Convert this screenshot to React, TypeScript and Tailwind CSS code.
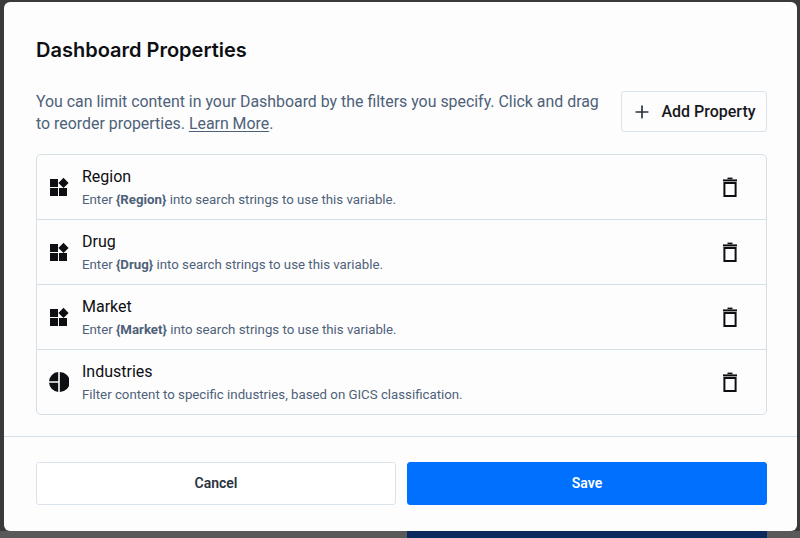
import React from 'react';
import { Plus } from 'lucide-react';

interface Property {
  name: string;
  token?: string;
  description?: string;
  icon: 'widgets' | 'pie';
}

const properties: Property[] = [
  { name: 'Region', token: '{Region}', icon: 'widgets' },
  { name: 'Drug', token: '{Drug}', icon: 'widgets' },
  { name: 'Market', token: '{Market}', icon: 'widgets' },
  {
    name: 'Industries',
    description: 'Filter content to specific industries, based on GICS classification.',
    icon: 'pie',
  },
];

const WidgetsIcon = () => (
  <svg width="20" height="20" viewBox="0 0 20 20" fill="#0d0f12">
    <rect x="1" y="2" width="8" height="8" />
    <rect x="1" y="11" width="8" height="8" />
    <rect x="10" y="11" width="8" height="8" />
    <path d="M14.5 0.8 L19.6 6 L14.5 11 L9.4 6 Z" />
  </svg>
);

const PieIcon = () => (
  <svg width="20" height="20" viewBox="0 0 20 20" fill="#0d0f12">
    <path d="M9.2 0 V9.2 H0 A10 10 0 0 1 9.2 0 Z" />
    <path d="M0 10.8 H9.2 V20 A10 10 0 0 1 0 10.8 Z" />
    <path d="M10.8 0 A10 10 0 0 1 10.8 20 Z" />
  </svg>
);

const TrashIcon = () => (
  <svg width="16" height="20" viewBox="0 0 16 20" fill="none" stroke="#0d0f12">
    <path d="M1 3.4 H15" strokeWidth="2" />
    <path d="M5.5 1.4 H10.5" strokeWidth="1.6" />
    <rect x="2.4" y="6" width="11.2" height="13" strokeWidth="2" />
  </svg>
);

const PropertyRow = ({ property }: { property: Property }) => (
  <div className="flex h-[65px] items-center border-b border-[#d5dfe6] last:border-b-0 last:h-[64px] pl-[12px] pr-[28px]">
    <div className="w-[33px] shrink-0">
      {property.icon === 'widgets' ? <WidgetsIcon /> : <PieIcon />}
    </div>
    <div className="flex-1 min-w-0 pt-[1px]">
      <div className="text-[16px] leading-[22px] text-[#0d0f12]">{property.name}</div>
      <div className="text-[13.25px] leading-[20px] text-[#4d6178] mt-[2px]">
        {property.token ? (
          <>
            Enter <span className="font-bold">{property.token}</span> into search strings to use this variable.
          </>
        ) : (
          property.description
        )}
      </div>
    </div>
    <button className="shrink-0 flex">
      <TrashIcon />
    </button>
  </div>
);

export default function App() {
  return (
    <div className="relative h-[538px] w-[800px] overflow-hidden bg-[#3b3a3b] font-['Roboto',sans-serif]">
      <div className="flex h-[7px] absolute bottom-0 left-0 right-0">
        <div className="w-[407px] bg-[#59595a]" />
        <div className="w-[360px] bg-[#0a2a5e]" />
        <div className="flex-1 bg-[#59595a]" />
      </div>
      <div className="relative ml-[4px] mr-[3px] mt-[2px] h-[529px] rounded-[6px] bg-[#fefdfe] flex flex-col">
        <div className="pl-[32px] pr-[30px] pt-[34px] flex-1">
          <h1 className="font-['Inter',sans-serif] text-[20px] leading-[28px] font-semibold text-[#0d0f12]">
            Dashboard Properties
          </h1>
          <div className="mt-[26px] flex items-start justify-between">
            <p className="w-[575px] pt-[1px] text-[15.9px] leading-[22px] text-[#4d6178]">
              You can limit content in your Dashboard by the filters you specify. Click and drag to reorder
              properties. <span className="underline underline-offset-2">Learn More</span>.
            </p>
            <button className="mt-[1px] flex h-[41px] w-[146px] items-center justify-center gap-[9px] rounded-[3px] border border-[#dbe3ea] text-[16px] font-medium text-[#16181d]">
              <Plus size={20} strokeWidth={2} color="#2b3340" />
              Add Property
            </button>
          </div>
          <div className="mt-[19px] rounded-[5px] border border-[#d5dfe6]">
            {properties.map((property) => (
              <PropertyRow key={property.name} property={property} />
            ))}
          </div>
        </div>
        <div className="h-[95px] border-t border-[#d5e0e8] pl-[32px] pr-[30px] pt-[25px] flex gap-[11px]">
          <button className="h-[43px] flex-1 rounded-[3px] border border-[#dbe3ea] bg-white text-[14px] font-semibold text-[#2b3340]">
            Cancel
          </button>
          <button className="h-[43px] flex-1 rounded-[3px] border border-[#0070ff] bg-[#0070ff] text-[14px] font-semibold text-white">
            Save
          </button>
        </div>
      </div>
    </div>
  );
}
